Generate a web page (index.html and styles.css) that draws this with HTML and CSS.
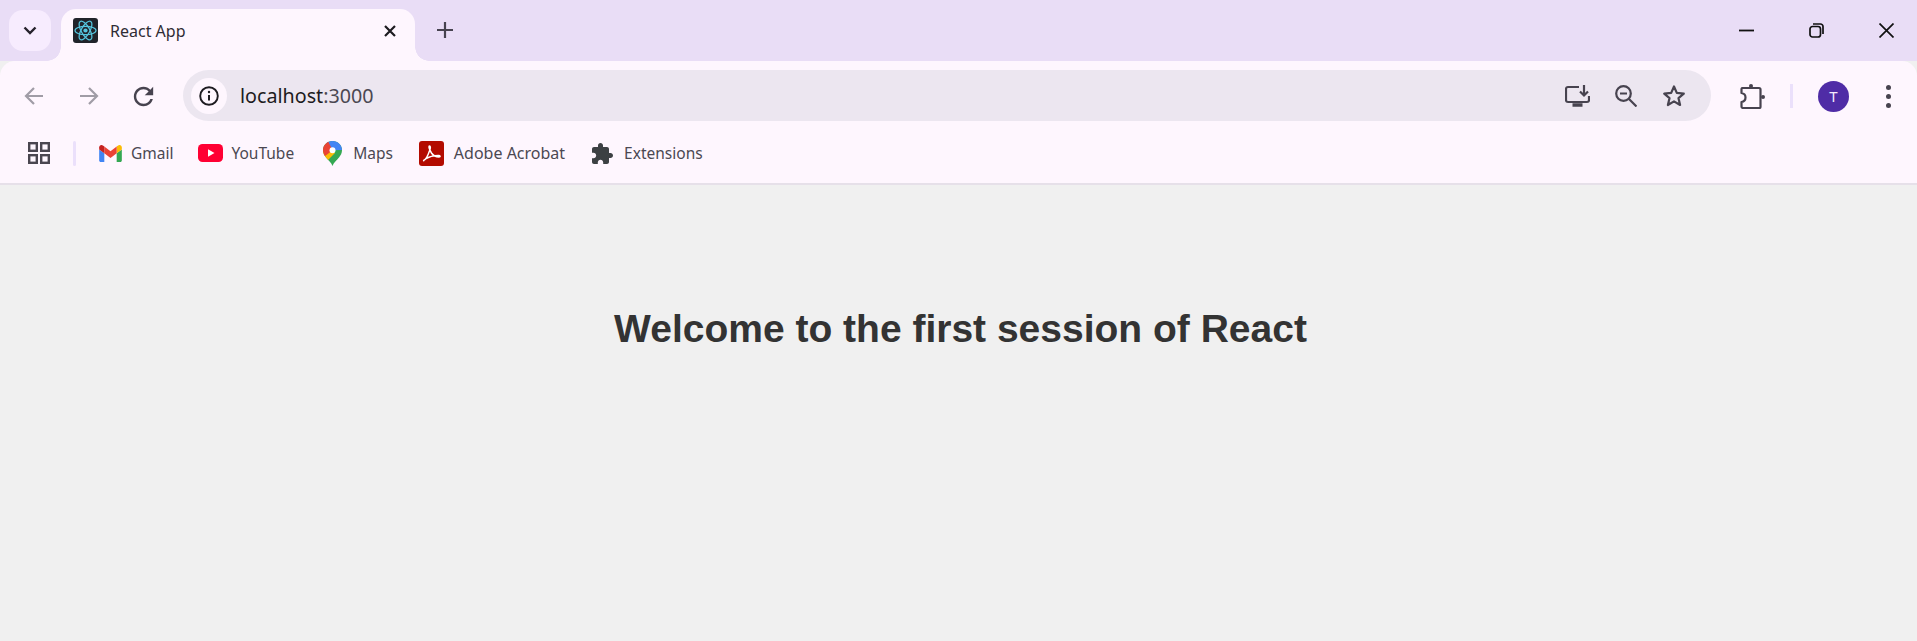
FILE: index.html
```html
<!DOCTYPE html>
<html lang="en">
<head>
  <meta charset="UTF-8">
  <meta name="viewport" content="width=device-width, initial-scale=1.0">
  <title>React App</title>
  <link rel="stylesheet" href="styles.css">
</head>
<body>
  <!-- tab strip -->
  <div class="tabstrip">
    <div class="tab-search">
      <svg width="14" height="9" viewBox="0 0 14 9"><path d="M1.500 1.500 7 7l5.500-5.500" fill="none" stroke="#26222c" stroke-width="2.400"/></svg>
    </div>
    <div class="tab">
      <svg class="favicon" width="25" height="25" viewBox="0 0 25 25">
        <rect width="25" height="25" rx="3" fill="#20232a"/>
        <g fill="none" stroke="#55c5de" stroke-width="1.200">
          <ellipse cx="12.500" cy="12.500" rx="10.500" ry="4.200"/>
          <ellipse cx="12.500" cy="12.500" rx="10.500" ry="4.200" transform="rotate(60 12.500 12.500)"/>
          <ellipse cx="12.500" cy="12.500" rx="10.500" ry="4.200" transform="rotate(120 12.500 12.500)"/>
        </g>
        <circle cx="12.500" cy="12.500" r="2.100" fill="#55c5de"/>
      </svg>
      <span class="tab-title">React App</span>
      <svg class="tab-close" width="12" height="12" viewBox="0 0 12 12"><path d="M1 1l10 10M11 1 1 11" stroke="#1d1b20" stroke-width="2.200"/></svg>
    </div>
    <div class="new-tab">
      <svg width="16" height="16" viewBox="0 0 16 16"><path d="M8 0v16M0 8h16" stroke="#47434f" stroke-width="2.200"/></svg>
    </div>
    <div class="window-controls">
      <svg width="15" height="15" viewBox="0 0 15 15"><path d="M0 7.500h15" stroke="#111" stroke-width="1.800"/></svg>
      <svg width="15" height="15" viewBox="0 0 15 15" fill="none" stroke="#111" stroke-width="1.700"><rect x="1" y="3.500" width="10.500" height="10.500" rx="2.500"/><path d="M4 1h7.500A2.500 2.500 0 0 1 14 3.500V11"/></svg>
      <svg width="15" height="15" viewBox="0 0 15 15"><path d="M.5.5l14 14M14.500.5l-14 14" stroke="#111" stroke-width="1.700"/></svg>
    </div>
  </div>

  <!-- address bar -->
  <div class="toolbar">
    <div class="nav-btn">
      <svg width="20" height="20" viewBox="0 0 20 20" fill="none" stroke="#a09ca6" stroke-width="2.200"><path d="M19 10H2M10 2 2 10l8 8"/></svg>
    </div>
    <div class="nav-btn">
      <svg width="20" height="20" viewBox="0 0 20 20" fill="none" stroke="#a09ca6" stroke-width="2.200"><path d="M1 10h17M10 2l8 8-8 8"/></svg>
    </div>
    <div class="nav-btn">
      <svg width="29" height="29" viewBox="0 0 24 24"><path fill="#47434f" d="M17.650 6.350C16.200 4.900 14.210 4 12 4c-4.420 0-7.990 3.580-7.990 8s3.570 8 7.990 8c3.730 0 6.840-2.550 7.730-6h-2.080c-.82 2.330-3.040 4-5.650 4-3.310 0-6-2.690-6-6s2.690-6 6-6c1.660 0 3.140.69 4.220 1.780L13 11h7V4l-2.350 2.350z"/></svg>
    </div>
    <div class="omnibox">
      <div class="site-info">
        <svg width="20" height="20" viewBox="0 0 20 20"><circle cx="10" cy="10" r="8.800" fill="none" stroke="#1d1b20" stroke-width="1.900"/><path d="M10 9v5.500" stroke="#1d1b20" stroke-width="2"/><circle cx="10" cy="6" r="1.200" fill="#1d1b20"/></svg>
      </div>
      <div class="url"><span class="host">localhost</span>:3000</div>
      <svg class="omni-icon" width="25" height="22" viewBox="0 0 25 22" fill="none" stroke="#47434f" stroke-width="2.200">
        <path d="M14 2H3a2 2 0 0 0-2 2v11a2 2 0 0 0 2 2h19a2 2 0 0 0 2-2v-4"/>
        <path d="M19 0v10M15 6.500l4 4 4-4"/>
        <path d="M7.500 20h10" stroke-width="3.500"/>
      </svg>
      <svg class="omni-icon" width="22" height="22" viewBox="0 0 22 22" fill="none" stroke="#47434f" stroke-width="2.200">
        <circle cx="8.500" cy="8.500" r="7.300"/><path d="M14 14l7.500 7.500M5 8.500h7"/>
      </svg>
      <svg class="omni-icon" width="24" height="23" viewBox="0 0 24 23" fill="none" stroke="#47434f" stroke-width="2.200" stroke-linejoin="round">
        <path d="M12 2.500l2.800 6.400 7 .7-5.300 4.600 1.600 6.800-6.100-3.600-6.100 3.600 1.600-6.800-5.300-4.600 7-.7z"/>
      </svg>
    </div>
    <div class="toolbar-end">
      <svg class="ext-icon" width="26" height="26" viewBox="0 0 26 26" fill="none" stroke="#47434f" stroke-width="2.200" stroke-linejoin="round">
        <path d="M3 5h17a1.500 1.500 0 0 1 1.500 1.500V24a1 1 0 0 1-1 1H4a1.500 1.500 0 0 1-1.500-1.500V19c3-.5 4-2.500 4-4.500S5.500 10.500 2.500 10V6z"/>
        <circle cx="12" cy="3" r="2" fill="#47434f" stroke="none"/>
        <circle cx="24" cy="14" r="2" fill="#47434f" stroke="none"/>
      </svg>
      <span class="toolbar-sep"></span>
      <span class="avatar">T</span>
      <div class="menu-dots"><i></i><i></i><i></i></div>
    </div>
  </div>

  <!-- bookmarks -->
  <div class="bookmarks">
    <svg class="apps" width="22" height="22" viewBox="0 0 22 22" fill="none" stroke="#4a4650" stroke-width="2.400">
      <rect x="1.200" y="1.200" width="7.600" height="7.600"/><rect x="13.200" y="1.200" width="7.600" height="7.600"/>
      <rect x="1.200" y="13.200" width="7.600" height="7.600"/><rect x="13.200" y="13.200" width="7.600" height="7.600"/>
    </svg>
    <span class="bookmark-sep"></span>
    <div class="bookmark gmail">
      <svg width="23" height="17" viewBox="52 42 88 66">
        <path fill="#4285f4" d="M58 108h14V74L52 59v43c0 3.320 2.690 6 6 6"/>
        <path fill="#34a853" d="M120 108h14c3.320 0 6-2.690 6-6V59l-20 15"/>
        <path fill="#fbbc04" d="M120 48v26l20-15v-8c0-7.420-8.470-11.650-14.400-7.200"/>
        <path fill="#ea4335" d="M72 74V48l24 18 24-18v26L96 92"/>
        <path fill="#c5221f" d="M52 51v8l20 15V48l-5.600-4.200c-5.940-4.450-14.400-.22-14.400 7.200"/>
      </svg>
      <span>Gmail</span>
    </div>
    <div class="bookmark youtube">
      <svg width="25" height="18" viewBox="0 0 25 18">
        <rect width="25" height="18" rx="4.500" fill="#ff0033"/>
        <path d="M10 5.200v7.600l6.500-3.800z" fill="#fff"/>
      </svg>
      <span>YouTube</span>
    </div>
    <div class="bookmark maps">
      <svg width="19" height="25" viewBox="0 0 19 25">
        <defs><clipPath id="pin"><path d="M9.500 0C4.200 0 0 4 0 9.200c0 3 1.300 5 3 7.200 2.600 3.200 5.500 5.200 6.500 8.600 1-3.400 3.900-5.400 6.500-8.600 1.700-2.200 3-4.200 3-7.200C19 4 14.800 0 9.500 0z"/></clipPath></defs>
        <g clip-path="url(#pin)">
          <rect width="19" height="25" fill="#34a853"/>
          <path d="M3 0h16v9l-9.500.2z" fill="#4285f4"/>
          <path d="M0 11l9.500-2 2.500 3L3 21H0z" fill="#fbbc04"/>
          <path d="M0 0h5l4.500 9.200L1.500 15.500 0 11z" fill="#ea4335"/>
        </g>
        <circle cx="9.500" cy="9.200" r="3" fill="#fff"/>
      </svg>
      <span>Maps</span>
    </div>
    <div class="bookmark acrobat">
      <svg width="25" height="25" viewBox="0 0 25 25">
        <rect width="25" height="25" rx="3" fill="#b30b00"/>
        <path d="M4.500 19.500c2-.5 4.500-5 6.500-11 .5-2 .5-3.500-.5-3.500s-.5 3 2 7c2 3 4.500 4 7.500 4 1.500 0 1.500-1.500-.5-1.500-4 0-10 1.500-13 3.500-1.500 1-2.500 2-1.500 1.500z" fill="none" stroke="#fff" stroke-width="1.500"/>
      </svg>
      <span>Adobe Acrobat</span>
    </div>
    <div class="bookmark extensions">
      <svg width="21" height="21" viewBox="2 1 21 21"><path fill="#3c4043" d="M20.500 11H19V7c0-1.100-.9-2-2-2h-4V3.500C13 2.120 11.880 1 10.500 1S8 2.120 8 3.500V5H4c-1.100 0-1.990.9-1.990 2v3.800H3.500c1.490 0 2.700 1.210 2.700 2.700s-1.210 2.700-2.700 2.700H2V20c0 1.100.9 2 2 2h3.800v-1.500c0-1.490 1.210-2.700 2.700-2.700 1.490 0 2.700 1.210 2.700 2.700V22H17c1.100 0 2-.9 2-2v-4h1.500c1.380 0 2.500-1.120 2.500-2.500S21.880 11 20.500 11z"/></svg>
      <span>Extensions</span>
    </div>
  </div>

  <!-- page content -->
  <main class="page">
    <h1>Welcome to the first session of React</h1>
  </main>
</body>
</html>
```

FILE: styles.css
```css
* {
  box-sizing: border-box;
}
html, body {
  height: 100%;
}
body {
  margin: 0;
  display: flex;
  flex-direction: column;
  overflow: hidden;
  background: #f0f0f0;
  font-family: "Noto Sans", "Open Sans", sans-serif;
}
svg {
  display: block;
  flex-shrink: 0;
}

/* tab strip */
.tabstrip {
  height: 61px;
  flex-shrink: 0;
  display: flex;
  align-items: flex-start;
  padding-left: 9px;
  background: #e9ddf6;
}
.tab-search {
  width: 42px;
  height: 41px;
  margin-top: 10px;
  display: flex;
  align-items: center;
  justify-content: center;
  border-radius: 14px;
  background: #f7ecfe;
}
.tab {
  position: relative;
  width: 354px;
  height: 52px;
  margin-top: 9px;
  margin-left: 10px;
  padding-left: 12px;
  padding-right: 19px;
  padding-bottom: 9px;
  display: flex;
  align-items: center;
  border-radius: 15px 15px 0 0;
  background: #fef6fe;
}
.tab::before,
.tab::after {
  content: "";
  position: absolute;
  bottom: 0;
  width: 14px;
  height: 14px;
}
.tab::before {
  left: -14px;
  background: radial-gradient(circle at 0 0, transparent 13.5px, #fef6fe 14px);
}
.tab::after {
  right: -14px;
  background: radial-gradient(circle at 100% 0, transparent 13.5px, #fef6fe 14px);
}
.tab-title {
  margin-left: 12px;
  font-size: 16px;
  color: #2f2c35;
  flex: 1;
}
.new-tab {
  margin-top: 22px;
  margin-left: 22px;
}
.window-controls {
  margin-left: auto;
  margin-top: 23px;
  padding-right: 23px;
  display: flex;
  gap: 55px;
}

/* address bar */
.toolbar {
  height: 70px;
  flex-shrink: 0;
  display: flex;
  align-items: center;
  padding-left: 6px;
  border-radius: 15px 15px 0 0;
  background: #fef6fe;
}
.nav-btn {
  width: 55px;
  display: flex;
  justify-content: center;
}
.omnibox {
  flex: 1;
  height: 51px;
  margin-left: 12px;
  margin-bottom: 1px;
  padding-left: 8px;
  padding-right: 25px;
  display: flex;
  align-items: center;
  gap: 25px;
  border-radius: 26px;
  background: #ece6f0;
}
.site-info {
  width: 36px;
  height: 36px;
  display: flex;
  align-items: center;
  justify-content: center;
  border-radius: 50%;
  background: #fef6fe;
}
.url {
  flex: 1;
  margin-left: -12px;
  font-size: 19.700px;
  color: #4b4852;
}
.host {
  color: #1d1b20;
}
.toolbar-end {
  width: 206px;
  display: flex;
  align-items: center;
  padding-left: 28px;
}
.toolbar-sep {
  width: 3px;
  height: 24px;
  margin-left: 25px;
  background: #ebe0fb;
}
.avatar {
  width: 31px;
  height: 31px;
  margin-left: 25px;
  display: flex;
  align-items: center;
  justify-content: center;
  border-radius: 50%;
  background: #4f2ca6;
  color: #f3eafc;
  font-size: 15px;
}
.menu-dots {
  margin-left: 37px;
  display: flex;
  flex-direction: column;
  gap: 4px;
}
.menu-dots i {
  width: 5px;
  height: 5px;
  border-radius: 50%;
  background: #47434f;
}

/* bookmarks */
.bookmarks {
  height: 54px;
  flex-shrink: 0;
  display: flex;
  align-items: center;
  padding-left: 28px;
  padding-bottom: 8px;
  border-bottom: 2px solid #e6e0e9;
  background: #fef6fe;
  font-size: 15.500px;
  color: #4b4852;
}
.apps {
  margin-right: 23px;
}
.bookmark-sep {
  width: 3px;
  height: 25px;
  margin-right: 23px;
  border-radius: 2px;
  background: #ebe0fb;
}
.bookmark {
  display: flex;
  align-items: center;
}
.gmail { margin-right: 25px; }
.youtube { margin-right: 29px; }
.maps { margin-right: 26px; }
.acrobat { margin-right: 27px; }
.gmail span { margin-left: 9px; }
.youtube span { margin-left: 8px; }
.maps span { margin-left: 11px; }
.acrobat span { margin-left: 10px; font-size: 16px; }
.extensions span { margin-left: 11px; }

/* page */
.page {
  flex: 1;
  padding-top: 122px;
  padding-left: 4px;
  background: #f0f0f0;
}
.page h1 {
  margin: 0;
  text-align: center;
  font-family: "Liberation Sans", Arial, sans-serif;
  font-size: 39px;
  font-weight: bold;
  color: #333;
}
```
